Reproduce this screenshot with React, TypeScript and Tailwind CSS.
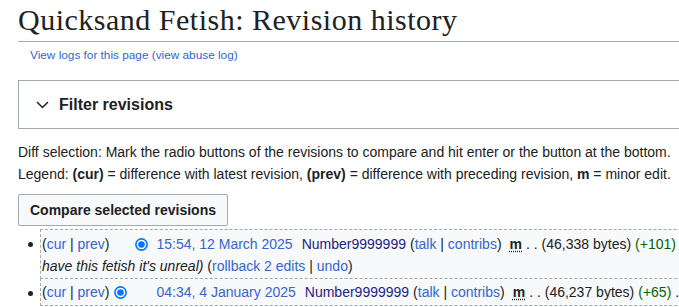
const SANS = '"Liberation Sans", Arial, sans-serif'
const SERIF = '"Liberation Serif", "Times New Roman", serif'

function Radio({ checked, hidden }: { checked?: boolean; hidden?: boolean }) {
    return (
        <svg
            width="13"
            height="13"
            viewBox="0 0 13 13"
            className={hidden ? 'invisible shrink-0' : 'shrink-0'}
        >
            <circle cx="6.5" cy="6.5" r="5.6" fill="#fff" stroke="#0075ff" strokeWidth="1.6" />
            {checked && <circle cx="6.5" cy="6.5" r="3.3" fill="#0075ff" />}
        </svg>
    )
}

function Pipe() {
    return <span className="text-[#202122]"> | </span>
}

function HistLinks() {
    return (
        <span className="text-[#202122]">
            (<span className="text-[#3366cc]">cur</span>
            <Pipe />
            <span className="text-[#3366cc]">prev</span>)
        </span>
    )
}

interface Rev {
    date: string
    bytes: string
    diff: string
    first: 'checked' | 'hidden'
}

function RevLine({ rev }: { rev: Rev }) {
    return (
        <div className="flex items-center whitespace-nowrap">
            <HistLinks />
            <span className="ml-[5px] flex items-center">
                <Radio checked={rev.first === 'checked'} hidden={rev.first === 'hidden'} />
            </span>
            <span className="ml-[8px] flex items-center">
                <Radio checked={rev.first === 'hidden'} hidden={rev.first === 'checked'} />
            </span>
            <span className="ml-[8px] text-[#3366cc]">{rev.date}</span>
            <span className="ml-[9px] text-[#222288]">Number9999999</span>
            <span className="ml-[4px]">
                (<span className="text-[#3366cc]">talk</span>
                <Pipe />
                <span className="text-[#3366cc]">contribs</span>)
            </span>
            <span className="ml-[8px] font-bold underline decoration-dotted underline-offset-2">m</span>
            <span className="ml-[4px]">. . ({rev.bytes} bytes)</span>
            <span className="ml-[4px] text-[#006400]">({rev.diff})</span>
            <span className="ml-[4px]">. . (→Gallery: people who really</span>
        </div>
    )
}

export default function App() {
    const revs: Rev[] = [
        { date: '15:54, 12 March 2025', bytes: '46,338', diff: '+101', first: 'hidden' },
        { date: '04:34, 4 January 2025', bytes: '46,237', diff: '+65', first: 'checked' },
    ]

    return (
        <div className="w-[679px] h-[307px] overflow-hidden bg-white text-[#202122]" style={{ fontFamily: SANS }}>
            <div className="w-[780px] pl-[18px]">
                {/* Heading */}
                <h1
                    className="pt-[1px] pb-[3px] text-[30px] leading-[37px] tracking-[0.5px] border-b border-[#a2a9b1]"
                    style={{ fontFamily: SERIF }}
                >
                    Quicksand Fetish: Revision history
                </h1>
                <div className="mt-[4px] ml-[12px] text-[11.8px] leading-[18px] text-[#3366cc]">
                    View logs for this page (view abuse log)
                </div>

                {/* Filter box */}
                <div className="mt-[16px] h-[49px] border border-[#a2a9b1] flex items-center pl-[17px]">
                    <svg width="13" height="8" viewBox="0 0 13 8" className="shrink-0">
                        <path d="M1 1 L6.5 6.5 L12 1" fill="none" stroke="#202122" strokeWidth="1.5" />
                    </svg>
                    <span className="ml-[10px] text-[16px] font-bold">Filter revisions</span>
                </div>

                {/* Legend */}
                <div className="mt-[12px] text-[14px] leading-[22px]">
                    <p>Diff selection: Mark the radio buttons of the revisions to compare and hit enter or the button at the bottom.</p>
                    <p>
                        Legend: <b>(cur)</b> = difference with latest revision, <b>(prev)</b> = difference with
                        preceding revision, <b>m</b> = minor edit.
                    </p>
                </div>

                <button className="mt-[9px] h-[32px] px-[11px] border border-[#a2a9b1] rounded-[2px] bg-[#f8f9fa] text-[14px] font-bold text-[#202122]">
                    Compare selected revisions
                </button>

                {/* History list */}
                <ul className="mt-[3px] text-[14px] leading-[21.5px]">
                    {revs.map((rev, i) => (
                        <li key={i} className={i > 0 ? 'flex -mt-px' : 'flex'}>
                            <span className="w-[22px] shrink-0 pl-[10px] pt-[13px]">
                                <span className="block w-[5px] h-[5px] rounded-full bg-[#202122]" />
                            </span>
                            <div
                                className={
                                    i === 0
                                        ? 'flex-1 border border-dashed border-[#a2a9b1] bg-[#f8f9fa] pl-[1px] pt-[4px] pb-[1px]'
                                        : 'flex-1 border border-dashed border-[#a2a9b1] bg-[#f8f9fa] pl-[1px] pt-[3px] pb-[1px]'
                                }
                            >
                                <RevLine rev={rev} />
                                {i === 0 && (
                                    <div className="whitespace-nowrap">
                                        <i>have this fetish it's unreal)</i> (
                                        <span className="text-[#3366cc]">rollback 2 edits</span>
                                        <Pipe />
                                        <span className="text-[#3366cc]">undo</span>)
                                    </div>
                                )}
                            </div>
                        </li>
                    ))}
                </ul>
            </div>
        </div>
    )
}
